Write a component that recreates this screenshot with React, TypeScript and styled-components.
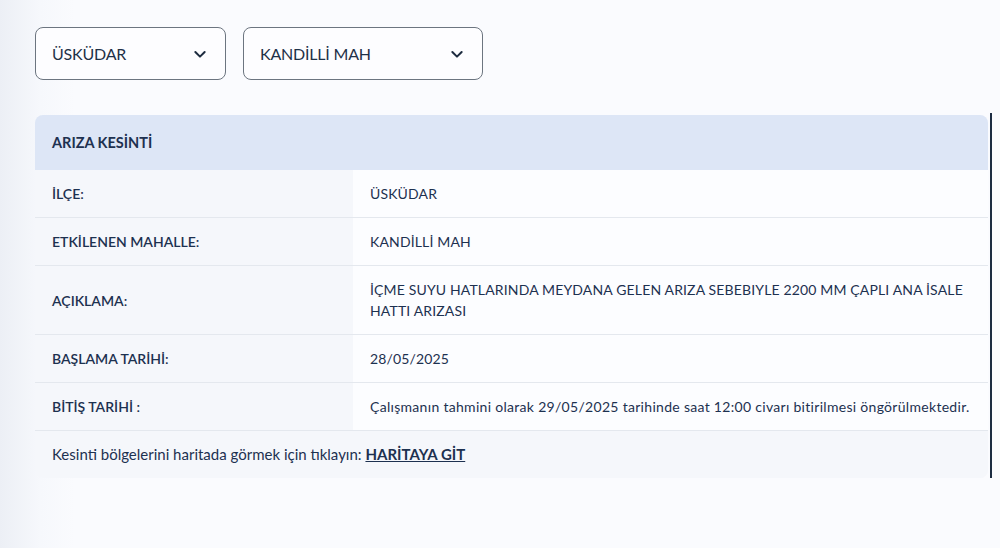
import React from 'react';
import styled, { createGlobalStyle } from 'styled-components';

const GlobalStyle = createGlobalStyle`
    html, body {
        margin: 0;
        padding: 0;
    }
    body {
        font-family: 'Lato', 'Noto Sans', sans-serif;
        color: #1d3150;
        background: #fafbfe;
    }
`;

const Page = styled.div`
    min-height: 548px;
    box-sizing: border-box;
    padding: 27px 8px 0 35px;
    background: linear-gradient(90deg, #eceff5 0px, #f6f8fc 40px, #fafbfe 75px, #fafbfe 100%);
`;

const Filters = styled.div`
    display: flex;
    gap: 17px;
    margin-bottom: 35px;
`;

const Select = styled.div<{ $w: number }>`
    display: flex;
    align-items: center;
    justify-content: space-between;
    box-sizing: border-box;
    width: ${(p) => p.$w}px;
    height: 53px;
    padding: 0 17px 0 16px;
    border: 1.5px solid #6c7580;
    border-radius: 8px;
    background: #fdfdff;
    font-size: 16px;
    color: #1f3148;
    letter-spacing: -0.2px;
`;

const Chevron = () => (
    <svg width="16" height="16" viewBox="0 0 24 24" fill="none" stroke="#1d2b3f" strokeWidth="3" strokeLinecap="round" strokeLinejoin="round">
        <path d="M5 9l7 7 7-7" />
    </svg>
);

const CardRow = styled.div`
    display: flex;
    align-items: stretch;
    gap: 2px;
    margin-top: -2px;
`;

const Card = styled.div`
    flex: 1;
    margin-top: 2px;
    border-radius: 8px;
    overflow: hidden;
    background: #f5f7fb;
`;

const ScrollLine = styled.div`
    width: 2px;
    background: #1c2c42;
`;

const Header = styled.div`
    height: 55px;
    display: flex;
    align-items: center;
    padding: 0 17px;
    background: #dde6f6;
    font-size: 14.5px;
    font-weight: 700;
    color: #1d3150;
`;

const Row = styled.div`
    display: grid;
    grid-template-columns: 318px 1fr;
    border-top: 1px solid #e4e8ee;

    &:first-of-type {
        border-top: none;
    }
`;

const Label = styled.div`
    display: flex;
    align-items: center;
    padding: 13px 17px;
    font-size: 14px;
    font-weight: 600;
    line-height: 21px;
    background: #f5f7fb;
`;

const Value = styled.div<{ $loose?: boolean }>`
    padding: 13px 17px;
    font-size: 14px;
    line-height: 21px;
    letter-spacing: ${(p) => (p.$loose ? '0.3px' : '0.15px')};
    background: #fcfdff;
`;

const Footer = styled.div`
    border-top: 1px solid #e4e8ee;
    padding: 13px 17px;
    font-size: 15px;
    line-height: 21px;
    background: #f5f7fb;

    a {
        color: #1d3150;
        font-weight: 700;
        text-decoration: underline;
    }
`;

const rows = [
    { label: 'İLÇE:', value: 'ÜSKÜDAR' },
    { label: 'ETKİLENEN MAHALLE:', value: 'KANDİLLİ MAH' },
    { label: 'AÇIKLAMA:', value: 'İÇME SUYU HATLARINDA MEYDANA GELEN ARIZA SEBEBIYLE 2200 MM ÇAPLI ANA İSALE HATTI ARIZASI' },
    { label: 'BAŞLAMA TARİHİ:', value: '28/05/2025' },
    { label: 'BİTİŞ TARİHİ :', value: 'Çalışmanın tahmini olarak 29/05/2025 tarihinde saat 12:00 civarı bitirilmesi öngörülmektedir.', loose: true }
];

const App: React.FC = () => (
    <>
        <GlobalStyle />
        <Page>
            <Filters>
                <Select $w={191}>
                    <span>ÜSKÜDAR</span>
                    <Chevron />
                </Select>
                <Select $w={240}>
                    <span>KANDİLLİ MAH</span>
                    <Chevron />
                </Select>
            </Filters>
            <CardRow>
                <Card>
                    <Header>ARIZA KESİNTİ</Header>
                    <div>
                        {rows.map((r) => (
                            <Row key={r.label}>
                                <Label>{r.label}</Label>
                                <Value $loose={r.loose}>{r.value}</Value>
                            </Row>
                        ))}
                    </div>
                    <Footer>
                        Kesinti bölgelerini haritada görmek için tıklayın: <a href="#harita">HARİTAYA GİT</a>
                    </Footer>
                </Card>
                <ScrollLine />
            </CardRow>
        </Page>
    </>
);

export default App;
